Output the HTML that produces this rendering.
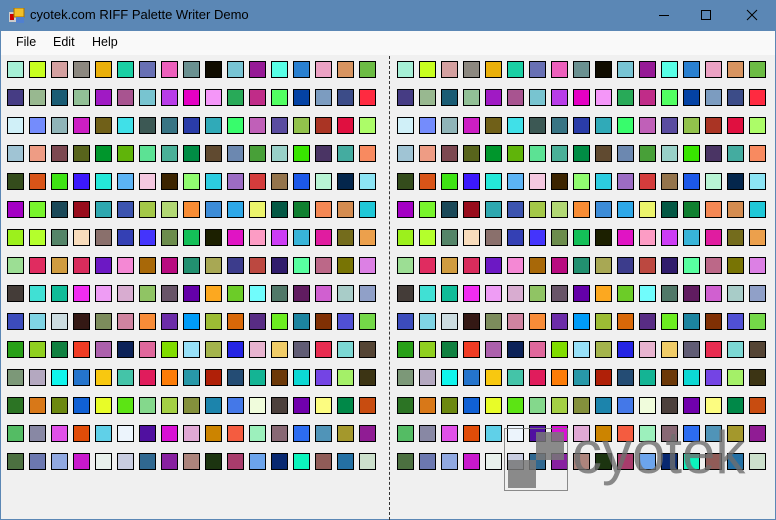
<!DOCTYPE html>
<html><head><meta charset="utf-8"><style>
*{margin:0;padding:0;box-sizing:border-box}
body{width:776px;height:520px;overflow:hidden;background:#f0f0f0;font-family:"Segoe UI","Liberation Sans",sans-serif;position:relative}
#title{position:absolute;left:0;top:0;width:776px;height:31px;background:#5b87b5;color:#000;font-size:13px}
#title .t{position:absolute;left:30px;top:7px}
#menu{position:absolute;left:1px;top:31px;width:774px;height:24px;background:#f9f9f9;font-size:12.5px}
#menu span{position:absolute;top:4px}
.b{position:absolute;border:1px solid #000;width:17px;height:17px}
#wl{position:absolute;left:0;top:31px;width:1px;height:489px;background:#5b87b5}
#wr{position:absolute;right:0;top:31px;width:1px;height:489px;background:#5b87b5}
#wb{position:absolute;left:0;bottom:0;width:776px;height:1px;background:#5b87b5}
#div{position:absolute;left:389px;top:56px;height:464px;border-left:1px dashed #333}
</style></head><body>
<div id="title">
<svg style="position:absolute;left:9px;top:8px" width="16" height="16"><rect x="0" y="4" width="7" height="10" fill="#ccc"/><rect x="1" y="6" width="4" height="6" fill="#c00"/><rect x="5" y="0" width="10" height="9" fill="#f2c028" stroke="#a87000"/><rect x="7" y="9" width="8" height="6" fill="#5080d0"/></svg>
<span class="t">cyotek.com RIFF Palette Writer Demo</span>
<svg style="position:absolute;left:650px;top:8px" width="120" height="16"><line x1="9" y1="7.5" x2="19" y2="7.5" stroke="#000"/><rect x="51.5" y="2.5" width="9" height="9" fill="none" stroke="#000"/><path d="M97 2L107 12M107 2L97 12" stroke="#000"/></svg>
</div>
<div id="menu"><span style="left:15px">File</span><span style="left:52px">Edit</span><span style="left:91px">Help</span></div>
<div id="wl"></div><div id="wr"></div><div id="wb"></div>
<div id="div"></div>
<div id="grid"></div>
<div style="position:absolute;left:504px;top:428px;width:64px;height:63px;border:1.5px solid rgba(120,120,120,.85)"></div>
<div style="position:absolute;left:536px;top:432px;width:28px;height:28px;background:rgba(120,120,120,.85)"></div>
<div style="position:absolute;left:508px;top:460px;width:28px;height:28px;background:rgba(120,120,120,.85)"></div>
<div style="position:absolute;left:572px;top:423px;font-family:'Liberation Sans',sans-serif;font-size:60px;line-height:60px;color:rgba(110,110,110,.8)">cyotek</div>
<script>
var rows=`a6f0d6,c8ff20,d4a0a0,8c8880,eab00a,1ad0a4,6870b4,ec60bc,6a9090,100c00,78c4d4,961a96,58ffe6,2a80d0,eca2c4,d89460,6cbc44
463c84,98b890,1a5c74,92c096,a01ac4,a85490,78c4d0,b83ce8,e400c4,f496f8,28aa58,c02c88,52ff62,0442a4,7c9cc0,3c4c88,ff2a40
d0f0f8,748cfc,90b4b8,cc1ec4,706018,40e0e8,3c5854,387484,2a3ca8,30aab8,38fc6c,c060b8,5a4ca0,92c24c,aa3424,e01040,acfc68
a0c4d4,ee9c84,7c4850,58641c,00962c,60b40a,5ce294,4ab098,008c44,604a30,6c88b0,48a038,98d0c8,38e400,4a3464,44aca0,f88a60
344c1c,d85418,3ee414,3c18fc,24e8d8,5cb4f4,f4c8e0,3c2400,90fc70,2ccce0,9c6cc4,d43c3c,94744c,1c58e8,b8f4d4,04264c,8ce4f4
a400c4,78f42c,1a4858,980c1c,2ea8b0,3c54b0,a4c848,b2d874,f88c34,3c8cd8,2ea8e8,ecf46c,045844,108030,f48854,d48c50,20c8d8
9cf01c,b4ff2c,548468,f8dcbc,8a706c,3440b4,4434fc,6c8c4c,14c058,1c2000,e014c4,fc9cc4,cc3cf4,38b4d8,e01ca0,746c1c,eca04c
9cde94,e02c60,d09c40,d82c5c,6c18c4,f488d4,a86808,b80c80,229070,a8a854,3c3c8c,bc4840,301c6c,58ffa0,bc6888,787404,dc80e4
443c38,40e0d4,10bc98,f02cf0,ee9cf4,d8acd0,90c464,685468,6400a8,fca820,6ccc28,70fcfc,507868,601c60,d060d0,a8ccc8,90a0c8
3c4cbc,80d4e4,ccdce0,341814,7c8c5c,d084a0,f88c38,6c2ca8,009cf8,9cbc34,d86808,582c84,6cec20,1c84a0,803004,5050d4,74d848
28a018,90d020,108040,f03c24,ac60ac,0c2258,e0689c,80dc00,98e0f8,a4b44c,2424e4,e8b4d0,f0cc68,605c74,e82c50,7cd8d4,544434
7c9878,b4a8c0,10f4ec,2474cc,f8c810,44c4a8,e01c5c,fc7c08,2898a8,b02008,244c74,14b494,6c3808,0cd8d4,7444e4,a4f068,3c3414
2c7424,d87818,6c8810,1060d4,e8fc28,5ce414,84d88c,a4d044,84903c,1c84ac,4478e8,f0fcdc,4c403c,7000ac,fcfc80,008848,c84c10
54bc64,8888a4,e050e8,e04c08,60d0e8,ecf4fc,5010a0,d810d4,e0a8d4,cc8400,f45c40,9cf0bc,886874,2c6cf0,5094b8,a4982c,901c94
4c7040,6c78b0,90a8e0,c818cc,e8f0ec,c8cce0,306890,8820a0,ac847c,1c3410,a83c6c,6ca4ec,082870,0cf4bc,905c58,2470a4,cce0cc`.split('\n');
var h='';
rows.forEach(function(r,ri){r.split(',').forEach(function(c,ci){
[7,397].forEach(function(o){h+='<div class="b" style="left:'+(o+ci*22)+'px;top:'+(61+ri*28)+'px;background:#'+c+'"></div>';});});});
document.getElementById('grid').innerHTML=h;
</script>
</body></html>
